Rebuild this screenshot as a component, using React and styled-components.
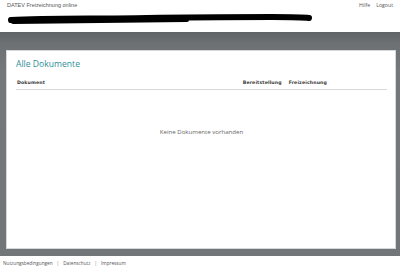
import React from "react";
import styled, { createGlobalStyle } from "styled-components";

const Global = createGlobalStyle`
  html, body { margin: 0; padding: 0; background: #fff; }
  body { font-family: "Open Sans", "Liberation Sans", sans-serif; width: 400px; height: 268px; overflow: hidden; }
`;

const Page = styled.div`
  display: flex;
  flex-direction: column;
  width: 400px;
  height: 268px;
`;

const Header = styled.header`
  height: 32px;
  display: flex;
  flex-direction: column;
  padding: 0 7px;
  box-sizing: border-box;
`;

const TopRow = styled.div`
  display: flex;
  justify-content: space-between;
  align-items: center;
  height: 10px;
`;

const AppName = styled.span`
  font-family: "Liberation Sans", Arial, sans-serif;
  font-size: 5.5px;
  color: #555;
`;

const Links = styled.nav`
  display: flex;
  gap: 6px;
  font-family: "Open Sans", sans-serif;
  font-size: 5.2px;
  color: #555;
`;

const Scribble = styled.svg`
  display: block;
  margin-top: 2px;
`;

const Stage = styled.main`
  height: 226px;
  background: linear-gradient(#5f6366 0px, #6e7174 12px, #75787b 40px, #737679 100%);
  padding: 18px 4px 7px 6px;
  box-sizing: border-box;
  display: flex;
`;

const Card = styled.section`
  flex: 1;
  background: #fff;
  border: 1px solid #d7d8d9;
  padding: 6px 8px 0 9px;
  display: flex;
  flex-direction: column;
`;

const Title = styled.h1`
  margin: 0;
  font-family: "Open Sans", sans-serif;
  font-weight: 400;
  font-size: 8.6px;
  color: #2e8f98;
  line-height: 14px;
`;

const TableHead = styled.div`
  display: grid;
  grid-template-columns: 1fr auto auto;
  column-gap: 7px;
  margin-top: 8px;
  padding: 0 0 2px 1px;
  border-bottom: 1px solid #d8d8d8;
  font-family: "DejaVu Sans", Verdana, sans-serif;
  font-weight: 700;
  font-size: 4.7px;
  letter-spacing: 0.1px;
  color: #3a3a3a;
  line-height: 8px;
`;

const HeadCell = styled.span`
  padding-right: ${(p) => p.$pr || 0}px;
`;

const Empty = styled.div`
  flex: 1;
  display: flex;
  justify-content: center;
  padding-top: 37px;
  font-family: "Open Sans", sans-serif;
  font-size: 6.1px;
  color: #666;
`;

const Footer = styled.footer`
  height: 10px;
  padding-top: 2px;
  display: flex;
  align-items: center;
  gap: 4px;
  padding-left: 3px;
  font-family: "Open Sans", sans-serif;
  font-size: 4.7px;
  color: #555;
`;

const Sep = styled.span`
  color: #777;
`;

export default function App() {
  return (
    <Page>
      <Global />
      <Header>
        <TopRow>
          <AppName>DATEV Freizeichnung online</AppName>
          <Links>
            <span>Hilfe</span>
            <span>Logout</span>
          </Links>
        </TopRow>
        <Scribble width="320" height="14" viewBox="0 0 320 14">
          <path
            d="M4 8 C40 6, 90 7, 140 6 C190 5, 230 5, 265 5 C285 5, 295 5, 302 6"
            stroke="#000"
            strokeWidth="6"
            fill="none"
            strokeLinecap="round"
          />
          <path
            d="M6 10 C60 9, 120 9, 180 8"
            stroke="#000"
            strokeWidth="4"
            fill="none"
            strokeLinecap="round"
          />
        </Scribble>
      </Header>
      <Stage>
        <Card>
          <Title>Alle Dokumente</Title>
          <TableHead>
            <HeadCell>Dokument</HeadCell>
            <HeadCell>Bereitstellung</HeadCell>
            <HeadCell $pr={60}>Freizeichnung</HeadCell>
          </TableHead>
          <Empty>Keine Dokumente vorhanden</Empty>
        </Card>
      </Stage>
      <Footer>
        <span>Nutzungsbedingungen</span>
        <Sep>|</Sep>
        <span>Datenschutz</span>
        <Sep>|</Sep>
        <span>Impressum</span>
      </Footer>
    </Page>
  );
}
